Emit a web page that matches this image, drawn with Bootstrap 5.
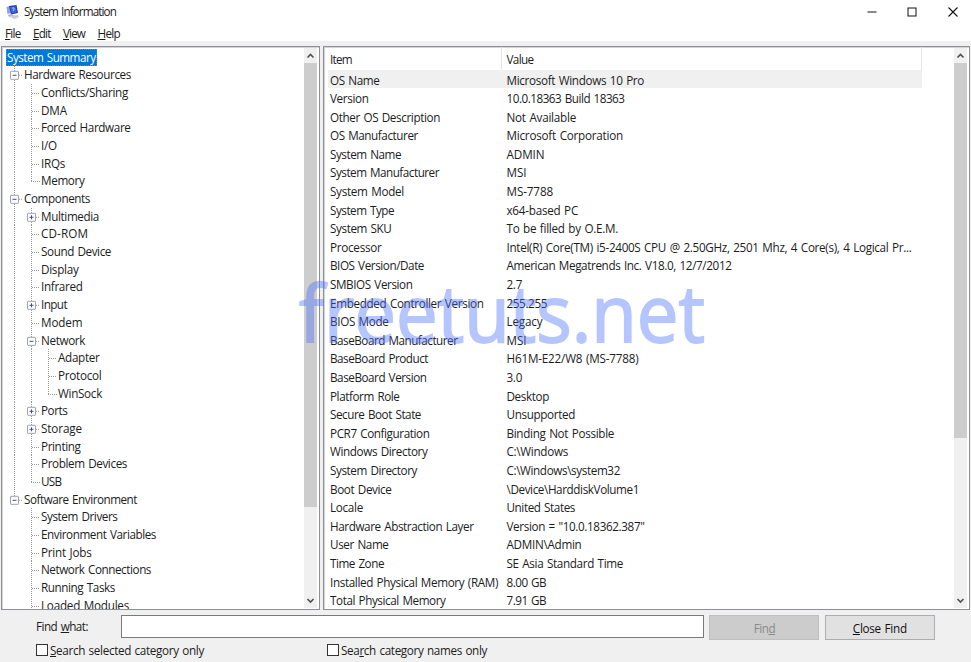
<!DOCTYPE html>
<html lang="en">
<head>
<meta charset="utf-8">
<meta name="viewport" content="width=device-width, initial-scale=1">
<title>System Information</title>
<link href="https://cdn.jsdelivr.net/npm/bootstrap@5.3.0/dist/css/bootstrap.min.css" rel="stylesheet">
<style>
  body { width: 971px; height: 662px; background: #f0f0f0; color: #1c1c1c; font: 11.7px/17px "Open Sans", "Noto Sans", sans-serif; }
  [data-w] { white-space: nowrap; word-spacing: .9px; }
  .title-bar { height: 23px; padding-left: 6px; }
  .menu-bar { height: 18px; padding: 2.4px 0 0 5px; gap: 12.5px; }
  .win-btn { width: 40.5px; height: 24px; }
  .panes { height: 564px; margin-top: 5px; padding: 0 1px 0 1px; gap: 3px; }
  .pane { background: #fff; border: 1px solid #8d9095; box-shadow: inset 1px 1px 0 #d4d4d6; }
  .tree-pane { width: 319px; }
  .tree { padding: 1.5px 0 0 4px; }
  .node { height: 17.69px; line-height: 17.69px; white-space: nowrap; }
  .node svg { width: 17px; height: 17.69px; flex: none; }
  .node span { margin-left: 1px; }
  .node .picked { background: #0078d7; color: #fff; outline: 1px dotted #c8702a; outline-offset: -1px; padding: 0 1px; margin-left: 0; }
  .scroll { width: 13px; margin: 1px 2px 1px 0; background: #f0f0f0; flex: none; }
  .scroll svg { width: 13px; height: 15px; flex: none; }
  .thumb { background: #cdcdcd; }
  .thumb-tree { height: 444px; }
  .thumb-list { height: 375px; }
  .list { width: 594px; margin-left: 4px; }
  .list-head { height: 22.5px; line-height: 24.6px; border-right: 1px solid #e5e5e5; }
  .list-head .cell-item { border-right: 1px solid #e5e5e5; }
  .line { height: 18.6px; line-height: 20.4px; white-space: nowrap; }
  .line.chosen { background: #f0f0f0; }
  .cell-item { width: 173.5px; padding-left: 2px; flex: none; }
  .cell-value { padding-left: 5px; }
  .find-row { height: 25px; margin-top: 5px; padding-left: 36px; }
  .find-label { width: 85px; padding-top: 3px; }
  .find-box { width: 583px; height: 23px; background: #fff; border: 1px solid #7a7a7a; border-radius: 0; padding: 0 4px; }
  .find-btn { width: 110px; height: 25px; border: 1px solid #adadad; border-radius: 0; background: #e1e1e1; color: #111; font-size: inherit; line-height: 24px; padding: 0; margin-left: 5.4px; }
  .find-btn:disabled { background: #ccc; border-color: #bfbfbf; color: #8a8a8a; opacity: 1; }
  .check-row { height: 20px; margin-top: .3px; padding-left: 36px; }
  .tick { width: 12px; height: 12px; border: 1px solid #333; border-radius: 0; background: #fff; margin: 0 2px 0 0; appearance: none; }
  .check-a { width: 291px; }
  .watermark { left: 300px; top: 260px; width: 410px; height: 100px; pointer-events: none; opacity: .4; overflow: visible; }
</style>
<script src="https://cdn.jsdelivr.net/npm/bootstrap@5.3.0/dist/js/bootstrap.bundle.min.js"></script>
</head>
<body class="overflow-hidden position-relative">
<svg class="d-none">
  <defs>
    <symbol id="bar" viewBox="0 0 17 17.69"><path d="M8.500 0V18" stroke="#999" stroke-dasharray="1 1"/></symbol>
    <symbol id="tee" viewBox="0 0 17 17.69"><path d="M8.500 0V18M9 9.500H17" stroke="#999" stroke-dasharray="1 1"/></symbol>
    <symbol id="end" viewBox="0 0 17 17.69"><path d="M8.500 0V9M8 9.500H17" stroke="#999" stroke-dasharray="1 1"/></symbol>
    <symbol id="box" viewBox="0 0 17 17.69"><path d="M13 9.300H17" stroke="#999" stroke-dasharray="1 1"/><rect x="4.500" y="5.300" width="8" height="8" rx=".5" fill="#fff" stroke="#a0a4aa"/><path d="M6.500 9.300H10.500" stroke="#3b4f8c"/></symbol>
    <symbol id="minus" viewBox="0 0 17 17.69"><path d="M8.500 0V18" stroke="#999" stroke-dasharray="1 1"/><use href="#box" width="17" height="17.69"/></symbol>
    <symbol id="minus-end" viewBox="0 0 17 17.69"><path d="M8.500 0V6" stroke="#999" stroke-dasharray="1 1"/><use href="#box" width="17" height="17.69"/></symbol>
    <symbol id="plus" viewBox="0 0 17 17.69"><use href="#minus" width="17" height="17.69"/><path d="M8.500 7.300V11.300" stroke="#3b4f8c"/></symbol>
    <symbol id="up" viewBox="0 0 13 15"><path d="M3.500 9.500L6.500 6.500L9.500 9.500" fill="none" stroke="#505050" stroke-width="1.600"/></symbol>
    <symbol id="down" viewBox="0 0 13 15"><path d="M3.500 6L6.500 9L9.500 6" fill="none" stroke="#505050" stroke-width="1.600"/></symbol>
  </defs>
</svg>

<header class="bg-white">
  <div class="title-bar d-flex align-items-center">
    <svg width="14" height="16" viewBox="0 0 14 16">
      <path d="M6 11.500l6-.5 1 2-4 2-4-1.500z" fill="#c9ccd6"/>
      <path d="M.5 3l3.500-1 1 7-3.500 1z" fill="#8fa3dd"/>
      <path d="M3 2l7.500-1 1.500 8-7 1.500z" fill="#2438b0"/>
      <path d="M4 3l5.500-.8 1.300 6-5.300 1z" fill="#3c62dc"/>
      <path d="M6 4.500c1.500-1.500 3 0 1.800 1.300l-.3 1" fill="none" stroke="#c7d6ff"/>
      <path d="M1.500 11l4-1 2 1.500-4 1.500z" fill="#a9b3d6"/>
    </svg>
    <span class="ms-1" data-w="92">System Information</span>
    <div class="d-flex ms-auto">
      <svg class="win-btn" viewBox="0 0 40.500 24"><path d="M17.500 12H26.500" stroke="#111"/></svg>
      <svg class="win-btn" viewBox="0 0 40.500 24"><rect x="18" y="8" width="8" height="8" fill="none" stroke="#111"/></svg>
      <svg class="win-btn" viewBox="0 0 40.500 24"><path d="M17.500 7.500L26.500 16.500M26.500 7.500L17.500 16.500" stroke="#111" stroke-width="1.100"/></svg>
    </div>
  </div>
  <nav class="menu-bar d-flex align-items-center">
    <span data-w="15.5"><u>F</u>ile</span><span data-w="17.5"><u>E</u>dit</span><span data-w="22"><u>V</u>iew</span><span data-w="22.5"><u>H</u>elp</span>
  </nav>
</header>

<main class="panes d-flex">
  <section class="pane tree-pane d-flex overflow-hidden">
    <div class="tree flex-grow-1">
      <div class="node d-flex"><div class="picked"><b class="fw-normal" data-w="88.5">System Summary</b></div></div>
      <div class="node d-flex"><svg><use href="#minus"/></svg><span data-w="107">Hardware Resources</span></div>
      <div class="node d-flex"><svg><use href="#bar"/></svg><svg><use href="#tee"/></svg><span data-w="87">Conflicts/Sharing</span></div>
      <div class="node d-flex"><svg><use href="#bar"/></svg><svg><use href="#tee"/></svg><span data-w="26">DMA</span></div>
      <div class="node d-flex"><svg><use href="#bar"/></svg><svg><use href="#tee"/></svg><span data-w="89.5">Forced Hardware</span></div>
      <div class="node d-flex"><svg><use href="#bar"/></svg><svg><use href="#tee"/></svg><span data-w="16">I/O</span></div>
      <div class="node d-flex"><svg><use href="#bar"/></svg><svg><use href="#tee"/></svg><span data-w="24">IRQs</span></div>
      <div class="node d-flex"><svg><use href="#bar"/></svg><svg><use href="#end"/></svg><span data-w="43.5">Memory</span></div>
      <div class="node d-flex"><svg><use href="#minus"/></svg><span data-w="66">Components</span></div>
      <div class="node d-flex"><svg><use href="#bar"/></svg><svg><use href="#plus"/></svg><span data-w="58">Multimedia</span></div>
      <div class="node d-flex"><svg><use href="#bar"/></svg><svg><use href="#tee"/></svg><span data-w="47">CD-ROM</span></div>
      <div class="node d-flex"><svg><use href="#bar"/></svg><svg><use href="#tee"/></svg><span data-w="70">Sound Device</span></div>
      <div class="node d-flex"><svg><use href="#bar"/></svg><svg><use href="#tee"/></svg><span data-w="37.5">Display</span></div>
      <div class="node d-flex"><svg><use href="#bar"/></svg><svg><use href="#tee"/></svg><span data-w="41.5">Infrared</span></div>
      <div class="node d-flex"><svg><use href="#bar"/></svg><svg><use href="#plus"/></svg><span data-w="26">Input</span></div>
      <div class="node d-flex"><svg><use href="#bar"/></svg><svg><use href="#tee"/></svg><span data-w="41.5">Modem</span></div>
      <div class="node d-flex"><svg><use href="#bar"/></svg><svg><use href="#minus"/></svg><span data-w="44">Network</span></div>
      <div class="node d-flex"><svg><use href="#bar"/></svg><svg><use href="#bar"/></svg><svg><use href="#tee"/></svg><span data-w="41.5">Adapter</span></div>
      <div class="node d-flex"><svg><use href="#bar"/></svg><svg><use href="#bar"/></svg><svg><use href="#tee"/></svg><span data-w="43.5">Protocol</span></div>
      <div class="node d-flex"><svg><use href="#bar"/></svg><svg><use href="#bar"/></svg><svg><use href="#end"/></svg><span data-w="44">WinSock</span></div>
      <div class="node d-flex"><svg><use href="#bar"/></svg><svg><use href="#plus"/></svg><span data-w="26.5">Ports</span></div>
      <div class="node d-flex"><svg><use href="#bar"/></svg><svg><use href="#plus"/></svg><span data-w="41">Storage</span></div>
      <div class="node d-flex"><svg><use href="#bar"/></svg><svg><use href="#tee"/></svg><span data-w="39.5">Printing</span></div>
      <div class="node d-flex"><svg><use href="#bar"/></svg><svg><use href="#tee"/></svg><span data-w="86">Problem Devices</span></div>
      <div class="node d-flex"><svg><use href="#bar"/></svg><svg><use href="#end"/></svg><span data-w="20.5">USB</span></div>
      <div class="node d-flex"><svg><use href="#minus-end"/></svg><span data-w="113">Software Environment</span></div>
      <div class="node d-flex"><svg></svg><svg><use href="#tee"/></svg><span data-w="76.5">System Drivers</span></div>
      <div class="node d-flex"><svg></svg><svg><use href="#tee"/></svg><span data-w="115">Environment Variables</span></div>
      <div class="node d-flex"><svg></svg><svg><use href="#tee"/></svg><span data-w="50.5">Print Jobs</span></div>
      <div class="node d-flex"><svg></svg><svg><use href="#tee"/></svg><span data-w="110">Network Connections</span></div>
      <div class="node d-flex"><svg></svg><svg><use href="#tee"/></svg><span data-w="74">Running Tasks</span></div>
      <div class="node d-flex"><svg></svg><svg><use href="#tee"/></svg><span data-w="88">Loaded Modules</span></div>
    </div>
    <div class="scroll d-flex flex-column">
      <svg><use href="#up"/></svg><div class="thumb thumb-tree"></div><svg class="mt-auto"><use href="#down"/></svg>
    </div>
  </section>

  <section class="pane flex-grow-1 d-flex overflow-hidden">
    <div class="list">
      <div class="list-head d-flex"><div class="cell-item"><span data-w="22">Item</span></div><div class="cell-value"><span data-w="27">Value</span></div></div>
      <div class="line chosen d-flex"><div class="cell-item"><span data-w="49.5">OS Name</span></div><div class="cell-value"><span data-w="137.5">Microsoft Windows 10 Pro</span></div></div>
      <div class="line d-flex"><div class="cell-item"><span data-w="38.5">Version</span></div><div class="cell-value"><span data-w="118">10.0.18363 Build 18363</span></div></div>
      <div class="line d-flex"><div class="cell-item"><span data-w="110">Other OS Description</span></div><div class="cell-value"><span data-w="69.5">Not Available</span></div></div>
      <div class="line d-flex"><div class="cell-item"><span data-w="88">OS Manufacturer</span></div><div class="cell-value"><span data-w="116.5">Microsoft Corporation</span></div></div>
      <div class="line d-flex"><div class="cell-item"><span data-w="71">System Name</span></div><div class="cell-value"><span data-w="38">ADMIN</span></div></div>
      <div class="line d-flex"><div class="cell-item"><span data-w="109">System Manufacturer</span></div><div class="cell-value"><span data-w="20">MSI</span></div></div>
      <div class="line d-flex"><div class="cell-item"><span data-w="74">System Model</span></div><div class="cell-value"><span data-w="46.5">MS-7788</span></div></div>
      <div class="line d-flex"><div class="cell-item"><span data-w="64">System Type</span></div><div class="cell-value"><span data-w="71.5">x64-based PC</span></div></div>
      <div class="line d-flex"><div class="cell-item"><span data-w="61.5">System SKU</span></div><div class="cell-value"><span data-w="111.5">To be filled by O.E.M.</span></div></div>
      <div class="line d-flex"><div class="cell-item"><span data-w="51.5">Processor</span></div><div class="cell-value"><span data-w="405">Intel(R) Core(TM) i5-2400S CPU @ 2.50GHz, 2501 Mhz, 4 Core(s), 4 Logical Pr...</span></div></div>
      <div class="line d-flex"><div class="cell-item"><span data-w="94">BIOS Version/Date</span></div><div class="cell-value"><span data-w="225">American Megatrends Inc. V18.0, 12/7/2012</span></div></div>
      <div class="line d-flex"><div class="cell-item"><span data-w="82.5">SMBIOS Version</span></div><div class="cell-value"><span data-w="15.5">2.7</span></div></div>
      <div class="line d-flex"><div class="cell-item"><span data-w="153.5">Embedded Controller Version</span></div><div class="cell-value"><span data-w="40.5">255.255</span></div></div>
      <div class="line d-flex"><div class="cell-item"><span data-w="58.5">BIOS Mode</span></div><div class="cell-value"><span data-w="36">Legacy</span></div></div>
      <div class="line d-flex"><div class="cell-item"><span data-w="127.5">BaseBoard Manufacturer</span></div><div class="cell-value"><span data-w="20">MSI</span></div></div>
      <div class="line d-flex"><div class="cell-item"><span data-w="98">BaseBoard Product</span></div><div class="cell-value"><span data-w="132">H61M-E22/W8 (MS-7788)</span></div></div>
      <div class="line d-flex"><div class="cell-item"><span data-w="96.5">BaseBoard Version</span></div><div class="cell-value"><span data-w="15.5">3.0</span></div></div>
      <div class="line d-flex"><div class="cell-item"><span data-w="69.5">Platform Role</span></div><div class="cell-value"><span data-w="42.5">Desktop</span></div></div>
      <div class="line d-flex"><div class="cell-item"><span data-w="91">Secure Boot State</span></div><div class="cell-value"><span data-w="68.5">Unsupported</span></div></div>
      <div class="line d-flex"><div class="cell-item"><span data-w="99.5">PCR7 Configuration</span></div><div class="cell-value"><span data-w="107.5">Binding Not Possible</span></div></div>
      <div class="line d-flex"><div class="cell-item"><span data-w="97.5">Windows Directory</span></div><div class="cell-value"><span data-w="61.5">C:\Windows</span></div></div>
      <div class="line d-flex"><div class="cell-item"><span data-w="87">System Directory</span></div><div class="cell-value"><span data-w="113.5">C:\Windows\system32</span></div></div>
      <div class="line d-flex"><div class="cell-item"><span data-w="61.5">Boot Device</span></div><div class="cell-value"><span data-w="132.5">\Device\HarddiskVolume1</span></div></div>
      <div class="line d-flex"><div class="cell-item"><span data-w="33">Locale</span></div><div class="cell-value"><span data-w="68.5">United States</span></div></div>
      <div class="line d-flex"><div class="cell-item"><span data-w="143.5">Hardware Abstraction Layer</span></div><div class="cell-value"><span data-w="138">Version = "10.0.18362.387"</span></div></div>
      <div class="line d-flex"><div class="cell-item"><span data-w="58.5">User Name</span></div><div class="cell-value"><span data-w="75">ADMIN\Admin</span></div></div>
      <div class="line d-flex"><div class="cell-item"><span data-w="54">Time Zone</span></div><div class="cell-value"><span data-w="116.5">SE Asia Standard Time</span></div></div>
      <div class="line d-flex"><div class="cell-item"><span data-w="168">Installed Physical Memory (RAM)</span></div><div class="cell-value"><span data-w="39.5">8.00 GB</span></div></div>
      <div class="line d-flex"><div class="cell-item"><span data-w="115.5">Total Physical Memory</span></div><div class="cell-value"><span data-w="39.5">7.91 GB</span></div></div>
    </div>
    <div class="scroll ms-auto d-flex flex-column">
      <svg><use href="#up"/></svg><div class="thumb thumb-list"></div><svg class="mt-auto"><use href="#down"/></svg>
    </div>
  </section>
</main>

<footer>
  <div class="find-row d-flex">
    <label class="find-label" for="what"><span data-w="52">Find <u>w</u>hat:</span></label>
    <input class="find-box" id="what" type="text">
    <button class="btn find-btn" disabled><span data-w="21.5">Fin<u>d</u></span></button>
    <button class="btn find-btn"><span data-w="54"><u>C</u>lose Find</span></button>
  </div>
  <div class="check-row d-flex align-items-center">
    <label class="check-a d-flex align-items-center"><input class="tick" type="checkbox"><span data-w="154"><u>S</u>earch selected category only</span></label>
    <label class="d-flex align-items-center"><input class="tick" type="checkbox"><span data-w="146">Sea<u>r</u>ch category names only</span></label>
  </div>
</footer>

<svg class="watermark position-absolute" viewBox="0 0 410 100"><text x="-1" y="82" textLength="406" lengthAdjust="spacingAndGlyphs" font-family="Open Sans, Noto Sans, sans-serif" font-size="78" fill="#496fff" stroke="#496fff" stroke-width="1.800">freetuts.net</text></svg>

<script>
  // Track each label so that it takes the width given in data-w.
  document.querySelectorAll('[data-w]').forEach(el => {
    const gap = el.dataset.w - el.getBoundingClientRect().width;
    el.style.letterSpacing = (gap / el.textContent.length).toFixed(3) + 'px';
  });
</script>
</body>
</html>
